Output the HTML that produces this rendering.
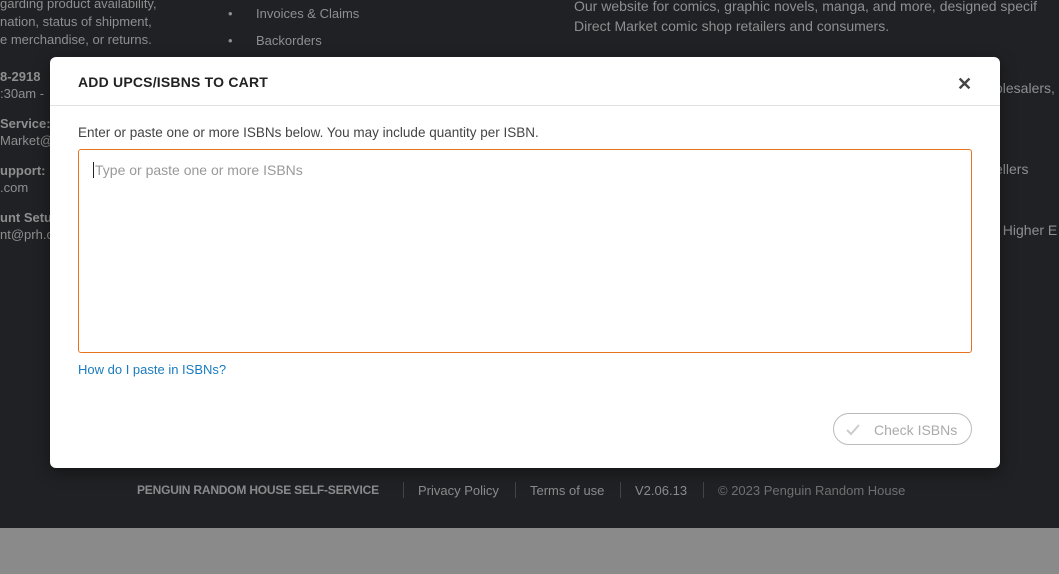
<!DOCTYPE html>
<html><head><style>
*{margin:0;padding:0;box-sizing:border-box}
body{width:1059px;height:574px;overflow:hidden;background:#8a8a8a;font-family:"Liberation Sans",sans-serif;position:relative}
.dark{position:absolute;left:0;top:0;width:1059px;height:528px;background:#202124;color:#8e8f91;font-size:13px}
.t{position:absolute;white-space:nowrap}
.b{font-weight:bold}
.modal{position:absolute;left:50px;top:57px;width:950px;height:411px;background:#fff;border-radius:6px;box-shadow:0 4px 16px rgba(0,0,0,.4)}
.hdr{height:49px;border-bottom:1px solid #e2e2e2;position:relative}
.hdr h2{position:absolute;left:28px;top:17px;font-size:14px;font-weight:bold;color:#222;letter-spacing:.2px}
.x{position:absolute;left:907px;top:17px;font-size:18px;font-weight:bold;color:#444}
.desc{position:absolute;left:28px;top:68px;font-size:13.5px;color:#444}
.ta{position:absolute;left:28px;top:92px;width:894px;height:204px;border:1px solid #e8731f;border-radius:3px}
.ta span{position:absolute;left:14px;top:12px;font-size:14px;color:#999;border-left:1px solid #222;padding-left:1px}
.link{position:absolute;left:28px;top:305px;font-size:13px;color:#1a7bbf}
.btn{position:absolute;left:783px;top:356px;width:139px;height:32px;border:1px solid #bbb;border-radius:16px;color:#aaa;font-size:14px}
.btn span{position:absolute;left:40px;top:8px}
.foot{position:absolute;top:483px;font-size:13px;color:#8a8b8d;white-space:nowrap}
.sep{position:absolute;top:482px;width:1px;height:16px;background:#444}
</style></head><body>
<div class="dark">
<div class="t" style="left:0;top:-4px">garding product availability,</div>
<div class="t" style="left:0;top:14px">nation,  status of shipment,</div>
<div class="t" style="left:0;top:32px">e merchandise, or returns.</div>
<div class="t" style="left:228px;top:6px">•</div><div class="t" style="left:256px;top:6px">Invoices &amp; Claims</div>
<div class="t" style="left:228px;top:33px">•</div><div class="t" style="left:256px;top:33px">Backorders</div>
<div class="t b" style="left:0;top:69px">8-2918</div>
<div class="t" style="left:0;top:86px">:30am -</div>
<div class="t b" style="left:0;top:116px">Service:</div>
<div class="t" style="left:0;top:133px">Market@p</div>
<div class="t b" style="left:0;top:163px">upport:</div>
<div class="t" style="left:0;top:180px">.com</div>
<div class="t b" style="left:0;top:210px">unt Setu</div>
<div class="t" style="left:0;top:227px">nt@prh.c</div>
<div class="t" style="left:574px;top:-2px;font-size:14px">Our website for comics, graphic novels, manga, and more, designed specif</div>
<div class="t" style="left:574px;top:18px;font-size:14px">Direct Market comic shop retailers and consumers.</div>
<div class="t" style="left:995px;top:80px;font-size:14px">olesalers,</div>
<div class="t" style="left:995px;top:161px;font-size:14px">ellers</div>
<div class="t" style="left:995px;top:222px;font-size:14px">, Higher E</div>
</div>
<div class="foot b" style="left:137px;font-size:12px;letter-spacing:-0.2px">PENGUIN RANDOM HOUSE SELF-SERVICE</div>
<div class="sep" style="left:403px"></div>
<div class="foot" style="left:418px">Privacy Policy</div>
<div class="sep" style="left:515px"></div>
<div class="foot" style="left:530px">Terms of use</div>
<div class="sep" style="left:620px"></div>
<div class="foot" style="left:635px">V2.06.13</div>
<div class="sep" style="left:703px"></div>
<div class="foot" style="left:718px;color:#6f7072">© 2023 Penguin Random House</div>
<div class="modal">
<div class="hdr"><h2>ADD UPCS/ISBNS TO CART</h2><div class="x">✕</div></div>
<div class="desc">Enter or paste one or more ISBNs below. You may include quantity per ISBN.</div>
<div class="ta"><span>Type or paste one or more ISBNs</span></div>
<div class="link">How do I paste in ISBNs?</div>
<div class="btn"><svg style="position:absolute;left:12px;top:10px" width="14" height="12" viewBox="0 0 14 12"><path d="M1 6l4 4 8-9" fill="none" stroke="#ccc" stroke-width="2"/></svg><span>Check ISBNs</span></div>
</div>
</body></html>
